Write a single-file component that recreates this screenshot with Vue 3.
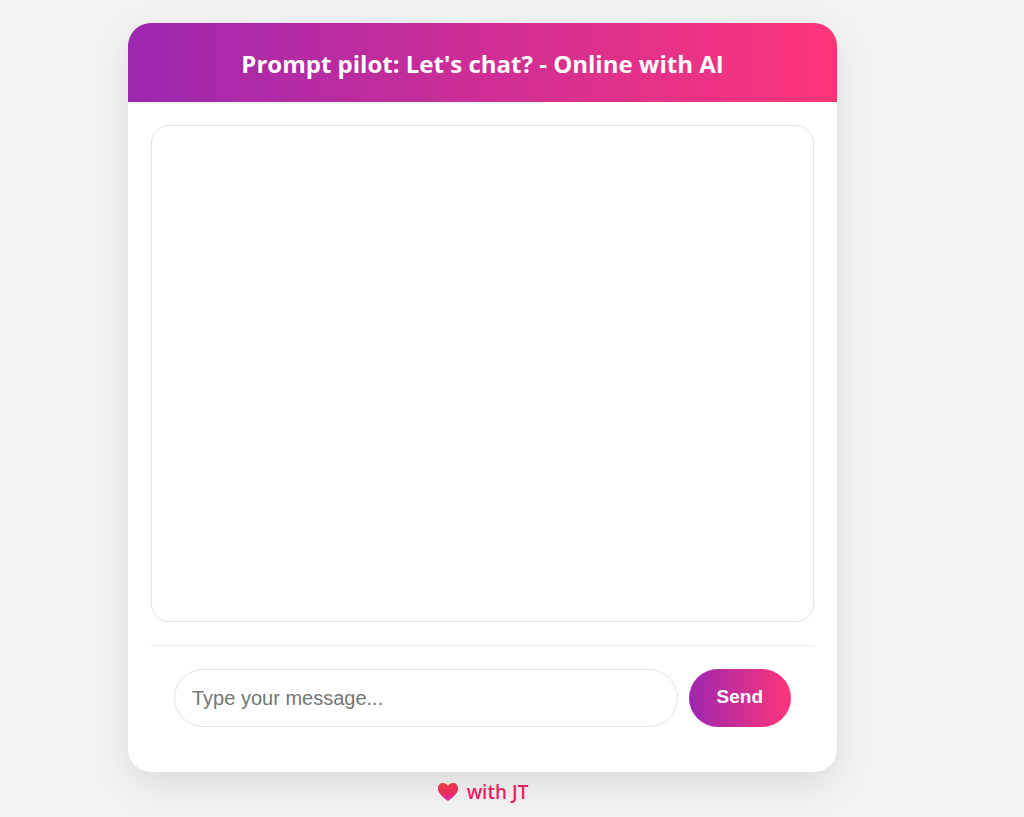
<script setup>
import { ref } from 'vue'
const message = ref('')
</script>

<template>
  <div class="page">
    <main class="chat">
      <header class="head"><h1>Prompt pilot: Let's chat? - Online with AI</h1></header>
      <div class="body">
        <section class="log" aria-label="Conversation"></section>
        <form class="composer" @submit.prevent="message = ''">
          <input v-model="message" type="text" placeholder="Type your message..." aria-label="Type your message" />
          <button type="submit">Send</button>
        </form>
      </div>
    </main>
    <footer class="foot">
      <svg width="22" height="20" viewBox="0 0 22 20" aria-hidden="true">
        <defs>
          <linearGradient id="heart" x1="0.4" y1="0" x2="0.55" y2="1">
            <stop offset="0" stop-color="#f03c48" />
            <stop offset="0.5" stop-color="#ea3058" />
            <stop offset="1" stop-color="#e81eb0" />
          </linearGradient>
        </defs>
        <path d="M11 19C8 16.500 1 12 1 6.500C1 3 3.300 1 6 1C8.300 1 10 2.200 11 4C12 2.200 13.700 1 16 1C18.700 1 21 3 21 6.500C21 12 14 16.500 11 19Z" fill="url(#heart)" />
        <path d="M11 4C12 2.200 13.700 1 16 1C18.700 1 21 3 21 6.500C21 8.500 20 10.500 18.500 12.200C19 8 17 4.500 11 4Z" fill="#c22a4c" opacity="0.2" />
      </svg>
      <span>with JT</span>
    </footer>
  </div>
</template>

<style>
body { background: #f3f3f3; }
</style>

<style scoped>
.page {
  box-sizing: border-box;
  min-height: 100vh;
  padding: 23px 187px 0 128px;
  font-family: "Open Sans", "Noto Sans", sans-serif;
}
.chat {
  border-radius: 23px;
  background: #fff;
  box-shadow: 0 12px 36px rgba(0, 0, 0, 0.1);
}
.head {
  padding: 23px 22px 21px;
  border-radius: 23px 23px 0 0;
  background: linear-gradient(to right, #9c27b0, #ff357a);
  color: #fff;
  text-align: center;
}
h1 { margin: 0; font-size: 24px; line-height: 35px; font-weight: 700; }
.body { padding: 23px 23px 22px; }
.log {
  box-sizing: border-box;
  height: 497px;
  border: 1px solid #e4e4e4;
  border-radius: 18px;
}
.composer {
  display: flex;
  gap: 11px;
  margin-top: 23px;
  padding: 23px;
  border-top: 1px solid #ececec;
}
input {
  box-sizing: border-box;
  flex: 1;
  min-width: 0;
  height: 58px;
  padding: 0 17px;
  border: 1px solid #e4e4e4;
  border-radius: 29px;
  background: #fff;
  color: #333;
  font: 20px "Liberation Sans", sans-serif;
  outline: none;
}
input::placeholder { color: #757575; }
button {
  height: 58px;
  padding: 0 28px 2px;
  border: 0;
  border-radius: 29px;
  background: linear-gradient(to right, #9c27b0, #ff357a);
  color: #fff;
  font: bold 19px "Liberation Sans", sans-serif;
}
.foot {
  display: flex;
  align-items: center;
  justify-content: center;
  gap: 8px;
  padding-top: 6px;
  color: #e91e63;
  font-size: 19px;
  font-weight: 600;
  line-height: 28px;
}
</style>
